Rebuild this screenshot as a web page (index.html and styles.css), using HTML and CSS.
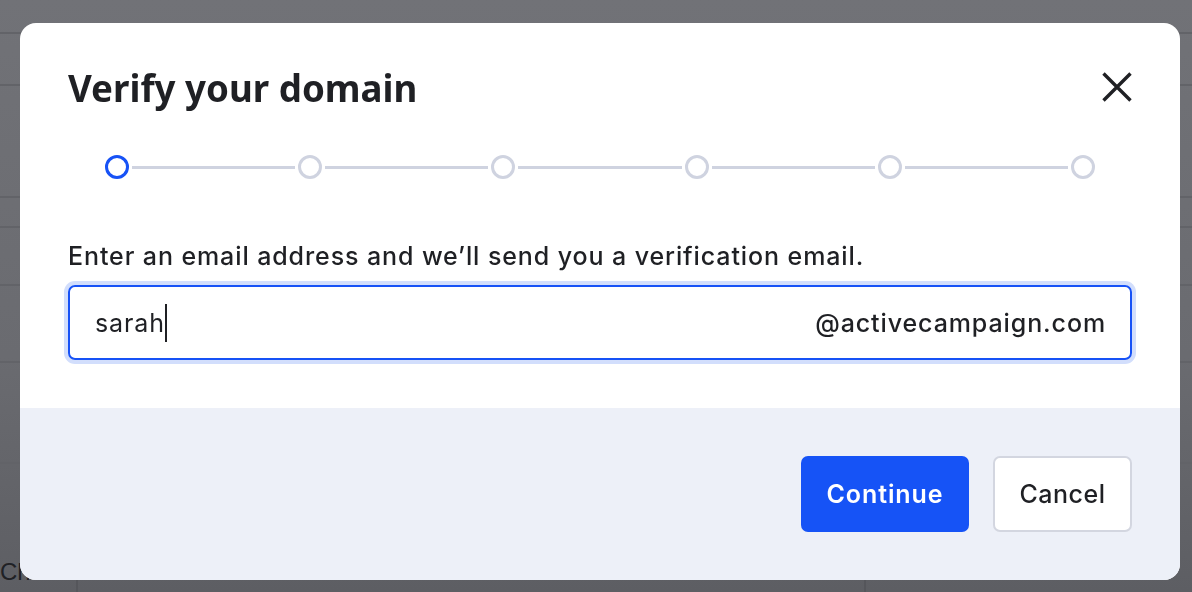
FILE: index.html
```html
<!DOCTYPE html>
<html lang="en">
<head>
<meta charset="utf-8">
<title>Verify your domain</title>
<link rel="stylesheet" href="styles.css">
</head>
<body>
<div class="page">
  <div class="row r1"></div>
  <div class="row r2"></div>
  <div class="row r3"></div>
  <div class="row r4"></div>
  <div class="row r5"></div>
  <div class="row r6"></div>
  <div class="row r7"></div>
  <div class="row r8">
    <span class="cell c1">Channel</span>
    <span class="cell c2"></span>
    <span class="cell c3">Campaign name</span>
  </div>
</div>

<div class="modal" role="dialog" aria-labelledby="title">
  <div class="body">
    <div class="head">
      <h1 id="title" class="title">Verify your domain</h1>
      <button class="close" aria-label="Close">
        <svg width="30" height="30" viewBox="0 0 30 30"><path d="M1.5 1.5 L28.5 28.5 M28.5 1.5 L1.5 28.5" stroke="#1f2024" stroke-width="3.4" fill="none"/></svg>
      </button>
    </div>
    <div class="stepper">
      <span class="dot active"></span><span class="line"></span>
      <span class="dot"></span><span class="line"></span>
      <span class="dot"></span><span class="line"></span>
      <span class="dot"></span><span class="line"></span>
      <span class="dot"></span><span class="line"></span>
      <span class="dot"></span>
    </div>
    <label class="label" for="email">Enter an email address and we’ll send you a verification email.</label>
    <div class="field">
      <span class="value">sarah</span><span class="caret"></span>
      <span class="suffix">@activecampaign.com</span>
    </div>
  </div>
  <div class="foot">
    <button class="btn primary">Continue</button>
    <button class="btn secondary">Cancel</button>
  </div>
</div>
</body>
</html>
```

FILE: styles.css
```css
* { box-sizing: border-box; }
html, body { margin: 0; padding: 0; }
body {
  width: 1192px;
  height: 592px;
  overflow: hidden;
  background: #6c6d72;
  font-family: Inter, "Noto Sans", "Liberation Sans", sans-serif;
  color: #1f2024;
}
.page {
  display: flex;
  flex-direction: column;
  height: 592px;
  background: linear-gradient(180deg, #717277 0%, #6a6b70 60%, #5d5e63 100%);
}
.row { border-bottom: 2px solid #626368; flex: none; }
.r1 { height: 34px; }
.r2 { height: 52px; }
.r3 { height: 112px; }
.r4 { height: 30px; }
.r5 { height: 58px; }
.r6 { height: 77px; }
.r7 { height: 101px; }
.r8 { flex: 1; border-bottom: 0; display: flex; }
.cell {
  font-family: "Liberation Sans", sans-serif;
  font-size: 24px;
  color: #202125;
  line-height: 28px;
  white-space: nowrap;
  display: flex;
  align-items: flex-end;
}
.c1 { width: 78px; border-right: 2px solid #55565b; padding-bottom: 6px; }
.c2 { width: 788px; border-right: 2px solid #55565b; }
.c3 { flex: 1; padding-left: 122px; padding-bottom: 18px; }

.modal {
  position: fixed;
  left: 20px;
  top: 23px;
  width: 1160px;
  height: 557px;
  background: #ffffff;
  border-radius: 16px;
  overflow: hidden;
  display: flex;
  flex-direction: column;
}
.body {
  height: 385px;
  padding: 42px 48px 0 48px;
}
.head {
  display: flex;
  justify-content: space-between;
  align-items: flex-start;
}
.title {
  margin: 0;
  font-family: "Noto Sans", sans-serif;
  font-size: 36.7px;
  font-weight: 700;
  line-height: 46px;
  color: #1f2024;
}
.close {
  margin-top: 7px;
  padding: 0;
  border: 0;
  background: none;
  width: 30px;
  height: 30px;
  display: block;
}
.close svg { display: block; }
.stepper {
  display: flex;
  align-items: center;
  margin: 44px 37px 0 37px;
}
.dot {
  width: 24px;
  height: 24px;
  border-radius: 50%;
  border: 3px solid #cfd3e0;
  flex: none;
}
.dot.active { border-color: #1752f6; }
.line {
  flex: 1;
  height: 3px;
  margin: 0 3px;
  background: #cfd3e0;
}
.label {
  display: block;
  margin-top: 61px;
  font-size: 25px;
  font-weight: 500;
  line-height: 32px;
  letter-spacing: 0.9px;
  color: #1f2024;
  white-space: nowrap;
}
.field {
  margin-top: 13px;
  height: 75px;
  border: 2px solid #1752f6;
  border-radius: 7px;
  box-shadow: 0 0 0 4px #d2defc;
  display: flex;
  align-items: center;
  padding: 0 25px;
  font-size: 25px;
  letter-spacing: 0.9px;
}
.value { color: #1f2024; }
.caret {
  width: 2px;
  height: 38px;
  background: #1f2024;
  margin-left: 0;
}
.suffix {
  margin-left: auto;
  margin-right: -1px;
  font-weight: 500;
  color: #1f2024;
}
.foot {
  flex: 1;
  background: #edf0f8;
  display: flex;
  justify-content: flex-end;
  align-items: center;
  gap: 24px;
  padding: 0 48px;
}
.btn {
  height: 76px;
  border-radius: 7px;
  font-family: inherit;
  font-size: 25px;
  cursor: pointer;
  padding: 0;
}
.primary {
  width: 168px;
  background: #1653f6;
  color: #ffffff;
  border: 0;
  font-weight: 600;
  letter-spacing: 0.9px;
}
.secondary {
  width: 139px;
  background: #ffffff;
  color: #1f2024;
  border: 2px solid #d3d6e0;
  font-weight: 500;
  letter-spacing: 0.5px;
}
```
